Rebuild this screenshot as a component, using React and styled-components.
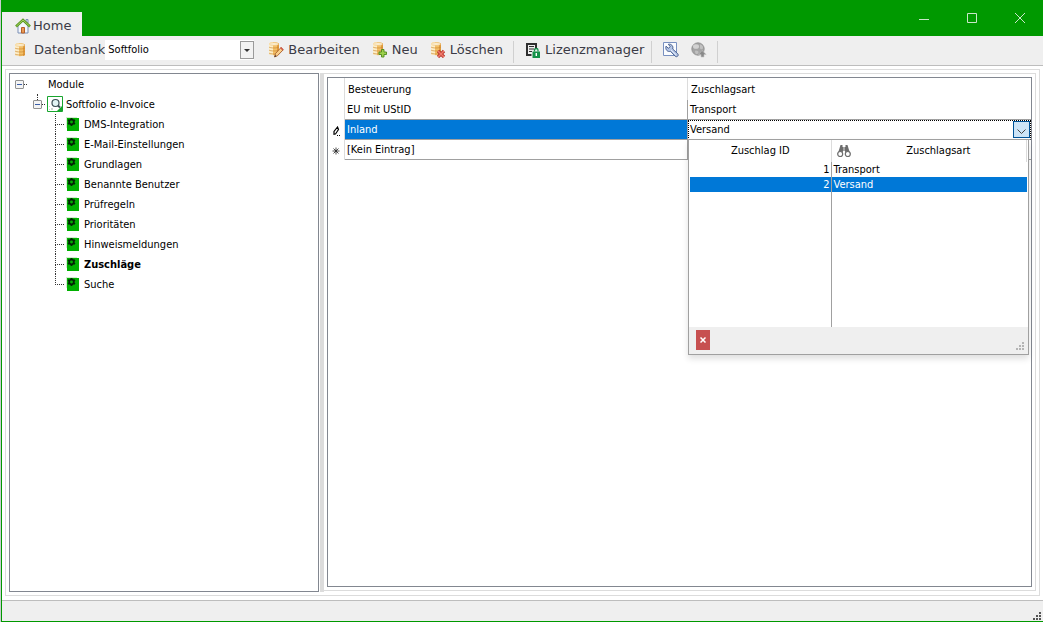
import React from 'react';
import styled, { createGlobalStyle, css } from 'styled-components';

const green = '#009900';
const blue = '#0078d7';
const frame = '#828790';
const soft = '#dcdcdc';
const face = '#efefef';

const Global = createGlobalStyle`
  * { box-sizing: border-box; }
  body { margin: 0; background: ${face}; }
  button, input, select { font: inherit; color: inherit; margin: 0; }
  table { border-collapse: separate; border-spacing: 0; }
  ul { list-style: none; margin: 0; padding: 0; }
`;

const Window = styled.div`
  min-height: 100vh;
  display: flex;
  flex-direction: column;
  background: ${face};
  border-left: 1px solid ${green};
  border-bottom: 1px solid ${green};
  font: 11px/20px 'DejaVu Sans Condensed', 'DejaVu Sans', Tahoma, sans-serif;
  color: #000;
`;

const Desktop = styled.div`
  padding-left: 1px;
  background: #c9ccd0;
`;

const TitleBar = styled.header`
  height: 36px;
  background: ${green};
  display: flex;
  align-items: flex-end;
  justify-content: space-between;
`;

const Tab = styled.button`
  width: 80px;
  height: 24px;
  padding: 4px 0 0 13px;
  border: 0;
  background: ${face};
  display: flex;
  align-items: center;
  gap: 2px;
  font: 13px/20px 'DejaVu Sans', Verdana, sans-serif;
  color: #3b3b46;
`;

const Controls = styled.div`
  align-self: stretch;
  display: flex;
`;

const ControlButton = styled.button`
  width: 48px;
  height: 36px;
  padding: 0 0 0 2px;
  border: 0;
  background: transparent;
  color: #c9e6c9;
  display: flex;
  align-items: center;
  justify-content: center;
`;

const ToolBar = styled.div`
  height: 30px;
  padding: 0 0 1px 11px;
  border-bottom: 1px solid #bdbdbd;
  display: flex;
  align-items: center;
  font: 13px/20px 'DejaVu Sans', Verdana, sans-serif;
  color: #3b3b46;
`;

const ToolButton = styled.button`
  height: 24px;
  padding: 0;
  margin-right: ${(p) => p.$after || 12}px;
  border: 0;
  background: transparent;
  display: flex;
  align-items: center;
  gap: 4px;
  white-space: nowrap;
`;

const ToolLabel = styled.label`
  display: flex;
  align-items: center;
  gap: 5px;
`;

const Divider = styled.span`
  width: 1px;
  height: 22px;
  margin: 4px 11px 0 0;
  background: #d0d0d0;
`;

const SelectBox = styled.span`
  position: relative;
  width: 149px;
  height: 20px;
  margin-right: 14px;
  background: #fff;
  color: #000;
  font: 11px/20px 'DejaVu Sans Condensed', Tahoma, sans-serif;
`;

const Select = styled.select`
  appearance: none;
  width: 100%;
  height: 20px;
  padding: 0 16px 0 3px;
  border: 0;
  background: transparent;
`;

const SelectArrow = styled.span`
  position: absolute;
  top: 1px;
  right: 0;
  width: 14px;
  height: 18px;
  border: 1px solid #9b9b9b;
  background: #f3f3f3;
  display: flex;
  align-items: center;
  justify-content: center;
  pointer-events: none;
`;

const Body = styled.main`
  flex: 1;
  padding: 3px 3px 4px;
  background: #fff;
  display: flex;
`;

const Workspace = styled.div`
  flex: 1;
  min-width: 0;
  padding: 3px;
  border: 1px solid ${soft};
  display: flex;
`;

const TreePanel = styled.nav`
  flex: 0 0 310px;
  margin-right: 1px;
  border: 1px solid ${frame};
  background: #fff;
`;

const Splitter = styled.div`
  flex: 0 0 4px;
  background: ${soft};
`;

const GridFrame = styled.section`
  flex: 1;
  min-width: 0;
  margin-bottom: 1px;
  padding: 3px;
  border: solid ${soft};
  border-width: 1px 1px 1px 0;
  display: flex;
`;

const GridPanel = styled.div`
  flex: 1;
  min-width: 0;
  border: 1px solid ${frame};
`;

const StatusBar = styled.footer`
  height: 21px;
  border-top: 1px solid #bdbdbd;
  background: ${face};
  padding: 0 2px 1px 0;
  display: flex;
  justify-content: flex-end;
  align-items: flex-end;
`;

const TreeRow = styled.div`
  height: 20px;
  padding-left: ${(p) => [5, 23, 45][p.$level]}px;
  display: flex;
  align-items: center;
  white-space: nowrap;
`;

const TreeText = styled.span`
  margin-left: ${(p) => p.$gap}px;
  padding-top: 2px;
  font-weight: ${(p) => (p.$selected ? 700 : 400)};
`;

const Guide = styled.span`
  width: 9px;
  height: 20px;
  margin-right: 2px;
  display: flex;
  flex-direction: column;

  &::before,
  &::after {
    content: '';
    height: 10px;
    border: 0 dotted #333;
    border-left-width: 1px;
  }
  &::before { border-bottom-width: 1px; height: 11px; }
  &::after { height: 9px; ${(p) => p.$last && css`border-left-width: 0;`} }
`;

const Joint = styled.span`
  height: 20px;
  display: flex;
  flex-direction: column;

  &::before {
    content: '';
    height: 6px;
    margin-left: 4px;
    border-left: ${(p) => (p.$linked ? 1 : 0)}px dotted #333;
  }
`;

const Expander = styled.button`
  width: 9px;
  height: 9px;
  padding: 1px;
  border: 1px solid #919191;
  border-radius: 1px;
  background: #f4f4f4;
  display: flex;
  align-items: center;

  &::before { content: ''; width: 5px; height: 1px; background: #3b5ea8; }
`;

const Stub = styled.span`
  width: 3px;
  margin-right: ${(p) => p.$after || 0}px;
  border-top: 1px dotted #333;
`;

const DataTable = styled.table`
  width: 100%;
  table-layout: fixed;
`;

const cell = css`
  height: 20px;
  padding: 0 2px;
  line-height: 19px;
  text-align: left;
  font-weight: 400;
`;

const HeadCell = styled.th`
  ${cell}
  height: 22px;
  line-height: 20px;
  padding: 2px 2px 0 3px;
  border-right: ${(p) => (p.$open ? 0 : 1)}px solid ${soft};
`;

const MarkCell = styled.td`
  ${cell}
  border-right: 1px solid ${soft};
  padding: 2px 0 0 4px;
  line-height: 0;
`;

const DataCell = styled.td`
  ${cell}
  border-bottom: 1px solid #a0a0a0;
  border-right: ${(p) => (p.$open ? 0 : 1)}px solid #a0a0a0;
  background: ${(p) => (p.$selected ? blue : '#fff')};
  color: ${(p) => (p.$selected ? '#fff' : '#000')};
`;

const EditCell = styled.td`
  height: 20px;
  padding: 0;
  position: relative;
`;

const Editor = styled.div`
  height: 20px;
  border: 1px dotted #000;
  border-bottom: 1px solid #a0a0a0;
  display: flex;
`;

const EditorInput = styled.input`
  flex: 1;
  min-width: 0;
  height: 18px;
  padding: 0 1px;
  border: 0;
  outline: 0;
  background: #fff;
`;

const DropButton = styled.button`
  width: 17px;
  height: 17px;
  padding: 3px 0 0;
  border: 1px solid #005499;
  background: #cce4f7;
  display: flex;
  align-items: center;
  justify-content: center;
`;

const Popup = styled.div`
  position: absolute;
  z-index: 1;
  top: 19px;
  left: 0;
  right: 2px;
  border: 1px solid #a0a0a0;
  background: #fff;
  box-shadow: 0 4px 6px rgba(0, 0, 0, 0.12);
`;

const PopupTable = styled.table`
  width: 100%;
  padding: 0 1px;
  table-layout: fixed;
`;

const PopupHead = styled.th`
  height: 22px;
  padding: 0;
  font-weight: 400;
  line-height: 16px;
  border-right: 1px solid ${soft};
`;

const SearchHead = styled.span`
  display: grid;
  grid-template-columns: 14px 1fr;
  align-items: center;
  padding-left: 5px;
`;

const PopupCell = styled.td`
  height: ${(p) => p.$height || 15}px;
  padding: 1px 1px 0 2px;
  line-height: 14px;
  text-align: ${(p) => (p.$number ? 'right' : 'left')};
  border-right: ${(p) => (p.$number ? 1 : 0)}px solid #a0a0a0;
  background: ${(p) => (p.$selected ? blue : '#fff')};
  color: ${(p) => (p.$selected ? '#fff' : '#000')};
`;

const PopupFoot = styled.div`
  height: 27px;
  padding: 3px 4px 4px 7px;
  background: ${face};
  display: flex;
  align-items: flex-end;
  justify-content: space-between;
`;

const ClearButton = styled.button`
  width: 14px;
  height: 20px;
  padding: 0;
  border: 0;
  background: #c75050;
  color: #fff;
  display: flex;
  align-items: center;
  justify-content: center;
`;

const Svg = ({ w = 16, h = w, children, ...rest }) => (
  <svg width={w} height={h} viewBox={`0 0 ${w} ${h}`} fill="none" aria-hidden="true" {...rest}>
    {children}
  </svg>
);

const HomeIcon = () => (
  <Svg>
    <path d="M3 7.500 8 3l5 4.500V15H3z" fill="#f4f7fc" stroke="#7b8fb5" />
    <path d="M11 1.500h2V5h-2z" fill="#dfe7f2" stroke="#7b8fb5" />
    <path d="M1 8.500 8 2l7 6.500" stroke="#5c9a25" strokeWidth="2.600" />
    <path d="M1.500 8 8 2l6.500 6" stroke="#a7d35f" strokeWidth="1" />
    <path d="M6.500 9.500h3V15h-3z" fill="#e89a55" stroke="#b5602a" />
  </Svg>
);

const Barrel = () => (
  <>
    <path d="M2 3c0-2.300 10-2.300 10 0v9.500c0 2.300-10 2.300-10 0z" fill="#f3c067" />
    <path d="M2 3c0-2.300 4-2 4-1.700V14C3.500 14 2 13.500 2 12.500z" fill="#fdeec8" />
    <path d="M10 2c1.300 0 2 .5 2 1v9.500c0 .8-.7 1.200-2 1.400z" fill="#e09a3c" />
    <ellipse cx="7" cy="3" rx="4.500" ry="1.300" fill="#fdf3da" stroke="#ecc27a" strokeWidth=".7" />
    <path d="M2 6c1 1.300 9 1.300 10 0M2 9c1 1.300 9 1.300 10 0M2 12c1 1.300 9 1.300 10 0" stroke="#cc8a35" strokeWidth=".7" />
  </>
);

const DatabaseIcon = () => <Svg><Barrel /></Svg>;

const EditIcon = () => (
  <Svg>
    <g transform="translate(-1 -1)"><Barrel /></g>
    <path d="m6.500 15 1-3.500L13 5.500l2.300 2.200-5.800 6z" fill="#f9cf8a" stroke="#a85d2a" strokeWidth=".9" />
    <path d="m12.500 5.500 2.500 2.500" stroke="#d2574a" strokeWidth="1.500" />
    <path d="m6.500 15 .6-2 1.300 1.300z" fill="#333" />
  </Svg>
);

const AddIcon = () => (
  <Svg>
    <g transform="translate(-1 -1)"><Barrel /></g>
    <path d="M9.500 7.500h2.500V10h2.500v2.500H12V15H9.500v-2.500H7V10h2.500z" fill="#9ed04c" stroke="#4f8a1c" strokeWidth=".9" />
  </Svg>
);

const DeleteIcon = () => (
  <Svg>
    <g transform="translate(-1 -1)"><Barrel /></g>
    <path d="m8 9 6 6m0-6-6 6" stroke="#b8352a" strokeWidth="3.200" />
    <path d="m8 9 6 6m0-6-6 6" stroke="#f07b6e" strokeWidth="1.500" />
  </Svg>
);

const LicenseIcon = () => (
  <Svg>
    <path d="M6.500 13H2V2h9v4.500" stroke="#2f2f2f" strokeWidth="2" />
    <path d="M4 4.500h5M4 7h5M4 9.500h3" stroke="#2f2f2f" />
    <path d="M7.500 9.500H15V16H7.500z" fill="#15924a" />
    <path d="M9.500 9.500V8c0-2 3.500-2 3.500 0v1.500" stroke="#15924a" strokeWidth="1.300" />
    <path d="M11.300 11v3" stroke="#fff" strokeWidth="1.400" />
  </Svg>
);

const SettingsIcon = () => (
  <Svg>
    <path d="M.5.5h13v13H.5z" fill="#fafcff" stroke="#7890c0" />
    <path d="M3 4.200 5.300 6.300 7.300 4.600 5.300 2.300C8 1.500 10.700 4 9.700 7l5 4.700c1.500 1.800-.8 4-2.500 2.500L7.500 9.300C4.500 10.300 2 7.500 3 4.200z" fill="#b4c5e6" stroke="#4a618f" />
    <path d="m8 8 5 4.800" stroke="#e6eefa" strokeWidth="1" />
  </Svg>
);

const GlobeIcon = () => (
  <Svg>
    <circle cx="7" cy="7" r="6.200" fill="#a4a4a4" stroke="#8c8c8c" strokeWidth=".8" />
    <ellipse cx="5" cy="4.500" rx="3" ry="2.300" fill="#d2d2d2" />
    <path d="M9 2.500c2 0 3.300 2 3 3.500S10 7.500 9 6.500zM4.500 8.500c2 0 3 .8 3 1.700s-1 2-2 2-2-2.700-1-3.700z" fill="#c0c0c0" />
    <path d="M11 8.500 15.200 12.500H13V15h-3v-2.500H7.500z" fill="#8a8a8a" stroke="#c4c4c4" strokeWidth=".6" />
  </Svg>
);

const ModuleIcon = () => (
  <Svg>
    <path d="M.5.500h15v15H.5z" fill="#fff" stroke="#18a52e" />
    <path d="M2 10h1v1H2zM4 12h2v2H4zM2 13h1v1H2zM6 10h2v1H6z" fill="#cfd6cf" />
    <path d="m10 15 5-5v5z" fill="#18a52e" />
    <circle cx="8.500" cy="7" r="3.500" fill="#e2f4f4" stroke="#3c4f55" strokeWidth="1.200" />
    <path d="m11 9.500 2 2" stroke="#3c4f55" strokeWidth="1.800" />
  </Svg>
);

const GearIcon = () => (
  <Svg w={14} h={14}>
    <path d="M0 0h11v11H0z" fill="#d3edd0" />
    <path d="M1 1h12v13H1z" fill="#00b000" />
    <circle cx="5.500" cy="5" r="2.300" stroke="#032406" strokeWidth="1.700" />
    <path d="M5.500 1v1.500M5.500 7.500V9M2 3l1.200.7M7.800 6.300 9 7M2 7l1.200-.7M7.800 3.700 9 3" stroke="#032406" strokeWidth="1.700" />
  </Svg>
);

const BinocularsIcon = () => (
  <Svg w={14} h={14}>
    <path d="M3.500 1h2v2h3V1h2l1.500 5 1.500 4H8.500l-.5-3H6l-.5 3H.5L2 6z" fill="#6d6d6d" />
    <circle cx="3.200" cy="10" r="2.500" fill="#fff" stroke="#6d6d6d" strokeWidth="1.200" />
    <circle cx="10.800" cy="10" r="2.500" fill="#fff" stroke="#6d6d6d" strokeWidth="1.200" />
    <path d="M7 3v4" stroke="#ddd" />
  </Svg>
);

const Grip = ({ color }) => (
  <Svg w={8} h={8}>
    <path fill={color} d="M6 0h2v2H6zM3 3h2v2H3zM6 3h2v2H6zM0 6h2v2H0zM3 6h2v2H3zM6 6h2v2H6z" />
  </Svg>
);

const PencilMark = () => (
  <Svg w={9} h={10}>
    <path d="M5.500 1 2 5.500V8h1.500L6.500 3.500zM1.500 8.500h1M5 9.500h1M7 9.500h1" stroke="#000" strokeWidth="1.200" />
  </Svg>
);

const NewMark = () => (
  <Svg w={8} h={8}>
    <path d="M4 .5v7M.5 4h7M1.500 1.500l5 5M6.500 1.500l-5 5" stroke="#222" strokeWidth=".8" />
  </Svg>
);

const modules = [
  'DMS-Integration',
  'E-Mail-Einstellungen',
  'Grundlagen',
  'Benannte Benutzer',
  'Prüfregeln',
  'Prioritäten',
  'Hinweismeldungen',
  'Zuschläge',
  'Suche',
];

function ModuleTree() {
  return (
    <TreePanel aria-label="Module">
      <ul>
        <li>
          <TreeRow $level={0}>
            <Joint><Expander aria-label="Module einklappen" /></Joint>
            <Stub />
            <TreeText $gap={21}>Module</TreeText>
          </TreeRow>
          <ul>
            <li>
              <TreeRow $level={1}>
                <Joint $linked><Expander aria-label="Softfolio e-Invoice einklappen" /></Joint>
                <Stub $after={2} />
                <ModuleIcon />
                <TreeText $gap={3}>Softfolio e-Invoice</TreeText>
              </TreeRow>
              <ul>
                {modules.map((name, i) => (
                  <li key={name}>
                    <TreeRow $level={2}>
                      <Guide $last={i === modules.length - 1} />
                      <GearIcon />
                      <TreeText $gap={4} $selected={name === 'Zuschläge'}>{name}</TreeText>
                    </TreeRow>
                  </li>
                ))}
              </ul>
            </li>
          </ul>
        </li>
      </ul>
    </TreePanel>
  );
}

function SurchargePopup() {
  return (
    <Popup>
      <PopupTable>
        <colgroup>
          <col style={{ width: '42%' }} />
          <col />
        </colgroup>
        <thead>
          <tr>
            <PopupHead>Zuschlag ID</PopupHead>
            <PopupHead>
              <SearchHead><BinocularsIcon />Zuschlagsart</SearchHead>
            </PopupHead>
          </tr>
        </thead>
        <tbody>
          <tr>
            <PopupCell $number>1</PopupCell>
            <PopupCell>Transport</PopupCell>
          </tr>
          <tr>
            <PopupCell $number $selected>2</PopupCell>
            <PopupCell $selected>Versand</PopupCell>
          </tr>
          <tr>
            <PopupCell $number $height={135} />
            <PopupCell $height={135} />
          </tr>
        </tbody>
      </PopupTable>
      <PopupFoot>
        <ClearButton aria-label="Schließen">
          <Svg w={6} h={6}><path d="m.5.500 5 5m0-5-5 5" stroke="currentColor" strokeWidth="1.500" /></Svg>
        </ClearButton>
        <Grip color="#b4b4b4" />
      </PopupFoot>
    </Popup>
  );
}

function SurchargeGrid() {
  return (
    <GridPanel>
      <DataTable>
        <colgroup>
          <col style={{ width: 17 }} />
          <col />
          <col />
        </colgroup>
        <thead>
          <tr>
            <HeadCell />
            <HeadCell>Besteuerung</HeadCell>
            <HeadCell $open>Zuschlagsart</HeadCell>
          </tr>
        </thead>
        <tbody>
          <tr>
            <MarkCell />
            <DataCell>EU mit UStID</DataCell>
            <DataCell $open>Transport</DataCell>
          </tr>
          <tr>
            <MarkCell><PencilMark /></MarkCell>
            <DataCell $selected>Inland</DataCell>
            <EditCell>
              <Editor>
                <EditorInput aria-label="Zuschlagsart" defaultValue="Versand" />
                <DropButton aria-label="Liste öffnen">
                  <Svg w={9} h={5}><path d="m.5.500 4 4 4-4" stroke="#444" /></Svg>
                </DropButton>
              </Editor>
              <SurchargePopup />
            </EditCell>
          </tr>
          <tr>
            <MarkCell><NewMark /></MarkCell>
            <DataCell>[Kein Eintrag]</DataCell>
            <DataCell $open />
          </tr>
        </tbody>
      </DataTable>
    </GridPanel>
  );
}

export default function App() {
  return (
    <Desktop>
      <Global />
      <Window>
        <TitleBar>
          <Tab><HomeIcon />Home</Tab>
          <Controls>
            <ControlButton aria-label="Minimieren">
              <Svg w={10} h={10}><path d="M0 6.500h10" stroke="currentColor" /></Svg>
            </ControlButton>
            <ControlButton aria-label="Maximieren">
              <Svg w={10} h={10}><path d="M.5.500h9v9h-9z" stroke="currentColor" /></Svg>
            </ControlButton>
            <ControlButton aria-label="Schließen">
              <Svg w={10} h={10}><path d="m0 0 10 10M10 0 0 10" stroke="currentColor" /></Svg>
            </ControlButton>
          </Controls>
        </TitleBar>
        <ToolBar>
          <ToolLabel htmlFor="database"><DatabaseIcon />Datenbank</ToolLabel>
          <SelectBox>
            <Select id="database" defaultValue="Softfolio">
              <option>Softfolio</option>
            </Select>
            <SelectArrow>
              <Svg w={6} h={3}><path d="M0 0h6L3 3z" fill="#333" /></Svg>
            </SelectArrow>
          </SelectBox>
          <ToolButton><EditIcon />Bearbeiten</ToolButton>
          <ToolButton><AddIcon />Neu</ToolButton>
          <ToolButton $after={10}><DeleteIcon />Löschen</ToolButton>
          <Divider />
          <ToolButton $after={7}><LicenseIcon />Lizenzmanager</ToolButton>
          <Divider />
          <ToolButton aria-label="Einstellungen"><SettingsIcon /></ToolButton>
          <ToolButton $after={10} aria-label="Web"><GlobeIcon /></ToolButton>
          <Divider />
        </ToolBar>
        <Body>
          <Workspace>
            <ModuleTree />
            <Splitter />
            <GridFrame>
              <SurchargeGrid />
            </GridFrame>
          </Workspace>
        </Body>
        <StatusBar><Grip color="#555" /></StatusBar>
      </Window>
    </Desktop>
  );
}
